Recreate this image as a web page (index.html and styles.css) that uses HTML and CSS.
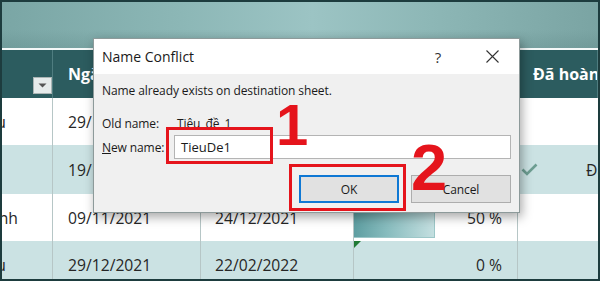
FILE: index.html
```html
<!DOCTYPE html>
<html lang="vi">
<head>
<meta charset="utf-8">
<title>Name Conflict</title>
<link rel="stylesheet" href="styles.css">
</head>
<body>
<div class="screen">
  <div class="banner"></div>
  <div class="sheet">
    <div class="row head">
      <div class="cell c1"><span class="filter"><svg width="9" height="5" viewBox="0 0 9 5"><path d="M0.5 0.5H8.5L4.5 4.5Z" fill="#555"/></svg></span></div>
      <div class="cell c2">Ngày bắt đầu</div>
      <div class="cell c3">Ngày kết thúc</div>
      <div class="cell c4">Tiến độ</div>
      <div class="cell c5">Đã hoàn thành</div>
    </div>
    <div class="row r1">
      <div class="cell c1 name">Thu thập dữ liệu</div>
      <div class="cell c2">29/10/2021</div>
      <div class="cell c3">15/11/2021</div>
      <div class="cell c4 num">100 %</div>
      <div class="cell c5"></div>
    </div>
    <div class="row r2 alt">
      <div class="cell c1 name"></div>
      <div class="cell c2">19/10/2021</div>
      <div class="cell c3">01/11/2021</div>
      <div class="cell c4 num">100 %</div>
      <div class="cell c5 done"><svg class="check" width="17" height="13" viewBox="0 0 17 13"><path d="M1.5 6.5L6 11L15.5 1.5" fill="none" stroke="#6d9e92" stroke-width="2.6"/></svg><span>Đã hoàn thành</span></div>
    </div>
    <div class="row r3">
      <div class="cell c1 name wide">Lập kế hoạch kinh</div>
      <div class="cell c2">09/11/2021</div>
      <div class="cell c3">24/12/2021</div>
      <div class="cell c4 num bar-cell"><span class="bar" style="width:50%"></span><span class="val">50 %</span></div>
      <div class="cell c5"></div>
    </div>
    <div class="row r4 alt">
      <div class="cell c1 name">Báo cáo số liệu</div>
      <div class="cell c2">29/12/2021</div>
      <div class="cell c3">22/02/2022</div>
      <div class="cell c4 num flag"><span class="val">0 %</span></div>
      <div class="cell c5"></div>
    </div>
  </div>

  <div class="dialog">
    <div class="titlebar">
      <span class="dtitle">Name Conflict</span>
      <span class="tbtn help">?</span>
      <span class="tbtn close"><svg width="13" height="13" viewBox="0 0 13 13"><path d="M0.5 0.5L12.5 12.5M12.5 0.5L0.5 12.5" stroke="#333" stroke-width="1.1"/></svg></span>
    </div>
    <div class="dbody">
      <p class="msg">Name already exists on destination sheet.</p>
      <div class="frow old">
        <span class="lbl">Old name:</span>
        <span class="oldval">Tiêu_đề_1</span>
      </div>
      <div class="frow">
        <span class="lbl"><u>N</u>ew name:</span>
        <span class="input">TieuDe1</span>
      </div>
      <div class="buttons">
        <span class="btn default">OK</span>
        <span class="btn">Cancel</span>
      </div>
    </div>
  </div>

  <div class="mark mark1"></div>
  <div class="mark mark2"></div>
  <span class="step step1">1</span>
  <span class="step step2">2</span>
</div>
</body>
</html>
```

FILE: styles.css
```css
* { box-sizing: border-box; margin: 0; padding: 0; }

body {
  width: 600px;
  height: 281px;
  overflow: hidden;
  background: #1d3c3e;
  font-family: "Open Sans", "Noto Sans", sans-serif;
}

.screen {
  position: relative;
  width: 600px;
  height: 281px;
  border: 2px solid #1d3c3e;
  overflow: hidden;
  display: flex;
  flex-direction: column;
  background: #fff;
}

.banner {
  flex: none;
  height: 48px;
  border-bottom: 2px solid #f4f8f8;
  background:
    linear-gradient(180deg, rgba(255,255,255,0) 60%, rgba(40,80,80,0.12) 100%),
    linear-gradient(90deg, #7aa6a5 0%, #8cb7b6 30%, #9cc4c4 52%, #8db7b6 72%, #7aa4a3 100%);
}

.sheet {
  display: flex;
  flex-direction: column;
}

.row {
  display: grid;
  grid-template-columns: 51px 148px 153px 164px 1fr;
  height: 47px;
  background: #fff;
}
.row.r2 { height: 49px; }
.row.alt { background: #cbe2e3; }

.cell {
  display: flex;
  align-items: center;
  padding: 0 15px;
  border-right: 1px solid #b6c6c6;
  font-size: 15.7px;
  color: #262626;
  white-space: nowrap;
  overflow: hidden;
}
.c3 { padding-left: 14px; }
.c5 { border-right: none; }

.head {
  height: 48px;
  background: #2c5c5f;
}
.head .cell {
  color: #fff;
  font-weight: 700;
  font-size: 16px;
  border-right: 1px solid #4f7d80;
}
.head .c1 {
  justify-content: flex-end;
  align-items: flex-end;
  padding: 0 0 4px 0;
}
.filter {
  width: 19px;
  height: 17px;
  background: #e6ebeb;
  border: 1px solid #aab4b4;
  display: flex;
  align-items: center;
  justify-content: center;
}

.name {
  justify-content: flex-end;
  padding: 0 46px 0 0;
}
.name.wide { padding-right: 34px; }

.num { justify-content: flex-end; }

.done {
  padding-left: 3px;
  gap: 48px;
}
.check { flex: none; }

.bar-cell, .flag { position: relative; }
.val { position: relative; }
.bar {
  position: absolute;
  left: -1px;
  top: 3px;
  bottom: 3px;
  border: 1px solid #9cc7c8;
  background: linear-gradient(90deg, #5e9ea1 0%, #86bbbd 40%, #c4dfe0 100%);
}
.flag::before {
  content: "";
  position: absolute;
  left: 0;
  top: 0;
  border-top: 7px solid #1f7a35;
  border-right: 7px solid transparent;
}

/* dialog */
.dialog {
  position: absolute;
  left: 91px;
  top: 36px;
  width: 427px;
  height: 175px;
  border: 1px solid #8d9a9a;
  background: #f0f0f0;
  box-shadow: 2px 4px 10px rgba(0,0,0,0.35);
  display: flex;
  flex-direction: column;
  font-family: "Open Sans", "Noto Sans", sans-serif;
  color: #1a1a1a;
}
.titlebar {
  height: 35px;
  background: #fff;
  display: flex;
  align-items: center;
  padding-left: 8px;
}
.dtitle {
  flex: 1;
  font-size: 14px;
}
.tbtn {
  width: 54px;
  display: flex;
  justify-content: center;
  align-items: center;
}
.help { font-size: 15px; color: #333; }

.dbody {
  flex: 1;
  padding: 8px 8px 0 8px;
  display: flex;
  flex-direction: column;
  font-size: 12px;
  letter-spacing: -0.1px;
}
.msg {
  height: 18px;
  line-height: 18px;
}
.frow {
  display: flex;
  align-items: center;
  height: 24px;
}
.frow.old {
  height: 18px;
  margin-top: 14px;
  margin-bottom: 3px;
}
.lbl { width: 72px; flex: none; }
.oldval { padding-left: 3px; }
.input {
  flex: 1;
  height: 24px;
  background: #fff;
  border: 1px solid #b4b4b4;
  display: flex;
  align-items: center;
  padding-left: 6px;
  font-size: 13px;
  letter-spacing: 0;
}
.buttons {
  margin-top: 16px;
  display: flex;
  justify-content: flex-end;
  gap: 12px;
}
.btn {
  width: 100px;
  height: 28px;
  background: #e1e1e1;
  border: 1px solid #adadad;
  display: flex;
  align-items: center;
  justify-content: center;
  font-size: 12px;
}
.btn.default {
  border: 2px solid #0f78d4;
}

/* annotations */
.mark {
  position: absolute;
  border: 3.5px solid #e5141c;
}
.mark1 { left: 164px; top: 125px; width: 107px; height: 37px; }
.mark2 { left: 287px; top: 162px; width: 117px; height: 47px; }
.step {
  position: absolute;
  font-family: "Liberation Sans", Arial, sans-serif;
  font-weight: 700;
  color: #e5141c;
  line-height: 1;
}
.step1 { left: 274px; top: 94px; font-size: 58px; }
.step2 { left: 409px; top: 133px; font-size: 65px; }
```
